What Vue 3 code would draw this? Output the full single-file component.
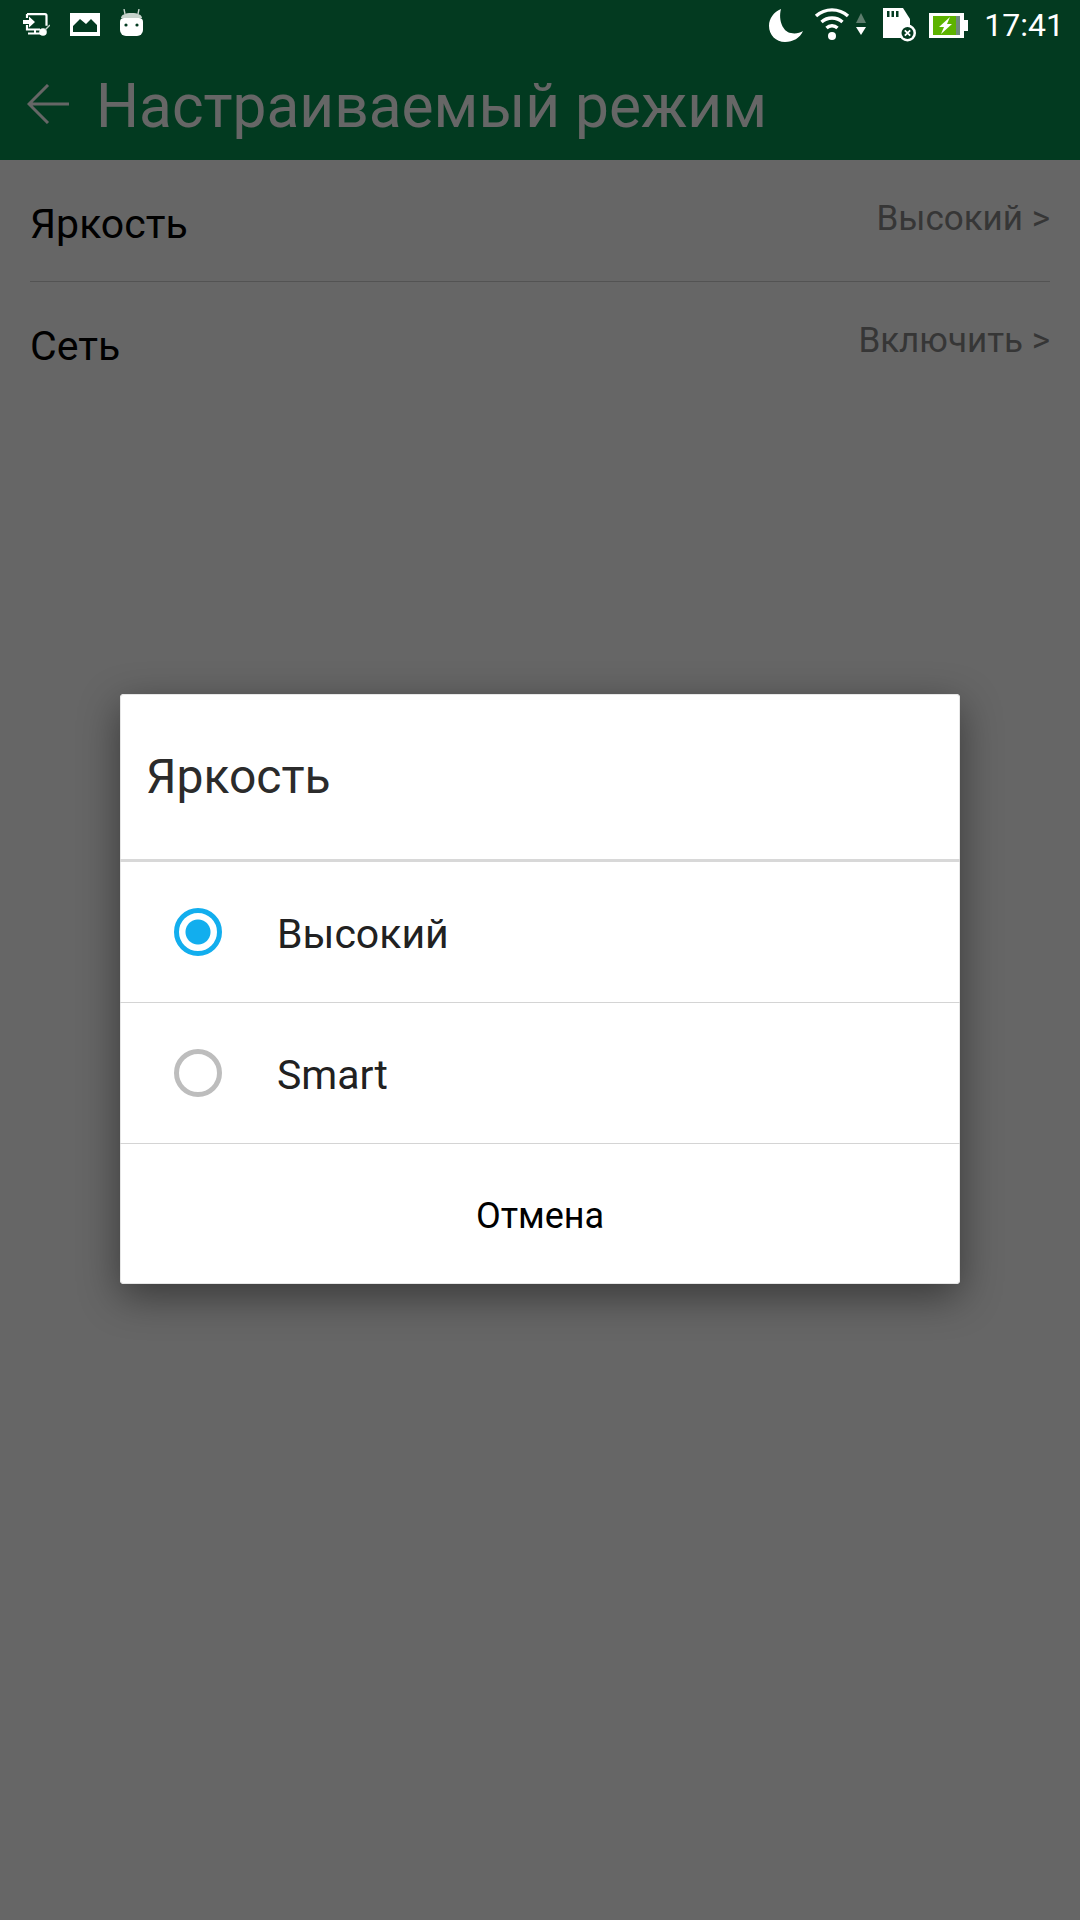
<template>
  <div class="screen">
    <div class="status-bar">
      <div class="status-left">
        <svg width="27" height="23" viewBox="0 0 27 23" fill="none">
          <path d="M4 1.200h18a1.500 1.500 0 0 1 1.500 1.500v10" stroke="#fff" stroke-width="2.200"/>
          <path d="M4 1v4M4 12v4.500h13" stroke="#fff" stroke-width="2.200"/>
          <path d="M0 7h6V3.500L12 9l-6 5.500V11H0z" fill="#fff"/>
          <path d="M12 17v3M5 20.500h13" stroke="#fff" stroke-width="2"/>
          <circle cx="20" cy="19" r="3.800" fill="#fff"/>
          <path d="M22 17l5-5" stroke="#c8d4ce" stroke-width="1.500"/>
        </svg>
        <svg width="30" height="23" viewBox="0 0 30 23">
          <path fill="#fff" fill-rule="evenodd" d="M0 0h30v23H0zM3 19h24v-7l-6-6-5 5-6-5-7 7z"/>
        </svg>
        <svg width="23" height="27" viewBox="0 0 23 27">
          <path d="M5 5L4 0M18 5l1-5" stroke="#c7d3cc" stroke-width="1.400"/>
          <path d="M1 9c0-3 4-5 10.500-5S22 6 22 9z" fill="#c7d3cc"/>
          <path d="M0 13a4 4 0 0 1 4-4h15a4 4 0 0 1 4 4v8a6 6 0 0 1-6 6H6a6 6 0 0 1-6-6z" fill="#fff"/>
          <circle cx="6" cy="16" r="1.600" fill="#033a20"/>
          <circle cx="17" cy="16" r="1.600" fill="#033a20"/>
        </svg>
      </div>
      <div class="status-right">
        <svg width="34" height="33" viewBox="0 0 34 33">
          <path fill="#fff" d="M12 0C5 3 0 9 0 17c0 9 7 16 16 16 8 0 15-4 18-11-3 2-8 3-12 2C14 23 9 11 12 0z"/>
        </svg>
        <svg width="52" height="34" viewBox="0 0 52 34" fill="none" class="wifi">
          <path d="M2 8A24 24 0 0 1 34 8M7.500 14A16 16 0 0 1 28.500 14M12.500 20A8 8 0 0 1 23.500 20" stroke="#fff" stroke-width="3.400"/>
          <circle cx="18" cy="28" r="4" fill="#fff"/>
          <path d="M47 5l5 10H42z" fill="#5d7c6c"/>
          <path d="M42 19h10l-5 8z" fill="#fff"/>
        </svg>
        <svg width="34" height="34" viewBox="0 0 34 34" class="sd">
          <path fill="#fff" d="M0 0h20l7 11v19H0z"/>
          <path d="M4 3h2.500v6H4zM8.500 3H11v6H8.500zM13 3h2.500v6H13z" fill="#033a20"/>
          <circle cx="24.500" cy="25" r="8.500" fill="#fff"/>
          <circle cx="24.500" cy="25" r="6" fill="#033a20"/>
          <path d="M21.800 22.300l5.400 5.400M27.200 22.300l-5.400 5.400" stroke="#fff" stroke-width="1.800"/>
        </svg>
        <svg width="39" height="25" viewBox="0 0 39 25" class="battery">
          <path fill="#fff" d="M0 0h35v25H0zM35 7h4v11h-4z"/>
          <path fill="#5db300" d="M4 3h23v19H4z"/>
          <path fill="#6f8a7c" d="M27 3h4v19h-4z"/>
          <path fill="#fff" d="M21 4L10 14h5l-3 7 11-10h-5z"/>
        </svg>
        <span class="clock">17:41</span>
      </div>
    </div>

    <header class="app-bar">
      <svg width="42" height="40" viewBox="0 0 42 40" fill="none" class="back">
        <path d="M21 1L2 20l19 19M2 20h40" stroke="#fff" stroke-width="3"/>
      </svg>
      <h1>Настраиваемый режим</h1>
    </header>

    <main class="settings">
      <div class="row">
        <span class="row-label">Яркость</span>
        <span class="row-value">Высокий &gt;</span>
      </div>
      <div class="row">
        <span class="row-label">Сеть</span>
        <span class="row-value">Включить &gt;</span>
      </div>
    </main>

    <div class="overlay">
      <div class="dialog">
        <div class="dialog-title">Яркость</div>
        <div class="option">
          <span class="radio checked"></span>
          <span class="option-text">Высокий</span>
        </div>
        <div class="option">
          <span class="radio"></span>
          <span class="option-text">Smart</span>
        </div>
        <div class="cancel">Отмена</div>
      </div>
    </div>
  </div>
</template>

<script setup>
</script>

<style>
body {
  margin: 0;
}
</style>

<style scoped>
.screen {
  position: relative;
  width: 1080px;
  height: 1920px;
  overflow: hidden;
  background: #fff;
  font-family: Roboto, "Noto Sans", sans-serif;
}

.status-bar {
  position: relative;
  z-index: 2;
  display: flex;
  justify-content: space-between;
  height: 50px;
  box-sizing: border-box;
  padding: 0 16px 0 23px;
  background: #033a20;
}

.status-left {
  display: flex;
  align-items: flex-end;
  gap: 20px;
  padding-bottom: 14px;
}

.status-right {
  display: flex;
  align-items: center;
}

.wifi {
  margin-left: 11px;
}

.sd {
  margin-left: 17px;
}

.battery {
  margin-left: 12px;
}

.clock {
  margin-left: 16px;
  font-size: 32px;
  color: #fff;
}

.app-bar {
  display: flex;
  align-items: center;
  height: 110px;
  padding-left: 27px;
  background: #069150;
  color: #fff;
}

.back {
  margin: -3px 27px 0 0;
}

.app-bar h1 {
  margin: 2px 0 0;
  font-size: 60.400px;
  font-weight: 400;
}

.settings {
  padding: 0 30px;
}

.row {
  display: flex;
  justify-content: space-between;
  height: 122px;
  box-sizing: border-box;
  padding-top: 40px;
  border-bottom: 1px solid #d0d0d0;
}

.row:last-child {
  border-bottom: none;
}

.row-label {
  font-size: 41px;
  color: #000;
}

.row-value {
  margin-top: -2px;
  font-size: 35px;
  color: #888;
}

.overlay {
  position: absolute;
  inset: 0;
  z-index: 1;
  display: flex;
  justify-content: center;
  padding-top: 694px;
  box-sizing: border-box;
  background: rgba(0, 0, 0, 0.6);
}

.dialog {
  width: 840px;
  height: 590px;
  border-radius: 4px;
  background: #fff;
  box-shadow: inset 0 0 0 1px #e6e6e6, 0 12px 40px rgba(0, 0, 0, 0.45);
}

.dialog-title {
  display: flex;
  align-items: center;
  height: 165px;
  padding-left: 26px;
  border-bottom: 3px solid #d8d8d8;
  font-size: 48px;
  color: #2b2b2b;
}

.option {
  display: flex;
  align-items: center;
  height: 140px;
  padding-left: 54px;
  gap: 55px;
  border-bottom: 1px solid #d4d4d4;
  font-size: 41px;
  color: #212121;
}

.option-text {
  padding-top: 3px;
}

.radio {
  width: 48px;
  height: 48px;
  box-sizing: border-box;
  border: 5px solid #bdbdbd;
  border-radius: 50%;
}

.radio.checked {
  border-color: #12aeee;
  background: radial-gradient(circle, #12aeee 0 12px, #fff 13px);
}

.cancel {
  display: flex;
  justify-content: center;
  align-items: center;
  height: 140px;
  padding-top: 3px;
  box-sizing: border-box;
  font-size: 36px;
  color: #000;
}
</style>
